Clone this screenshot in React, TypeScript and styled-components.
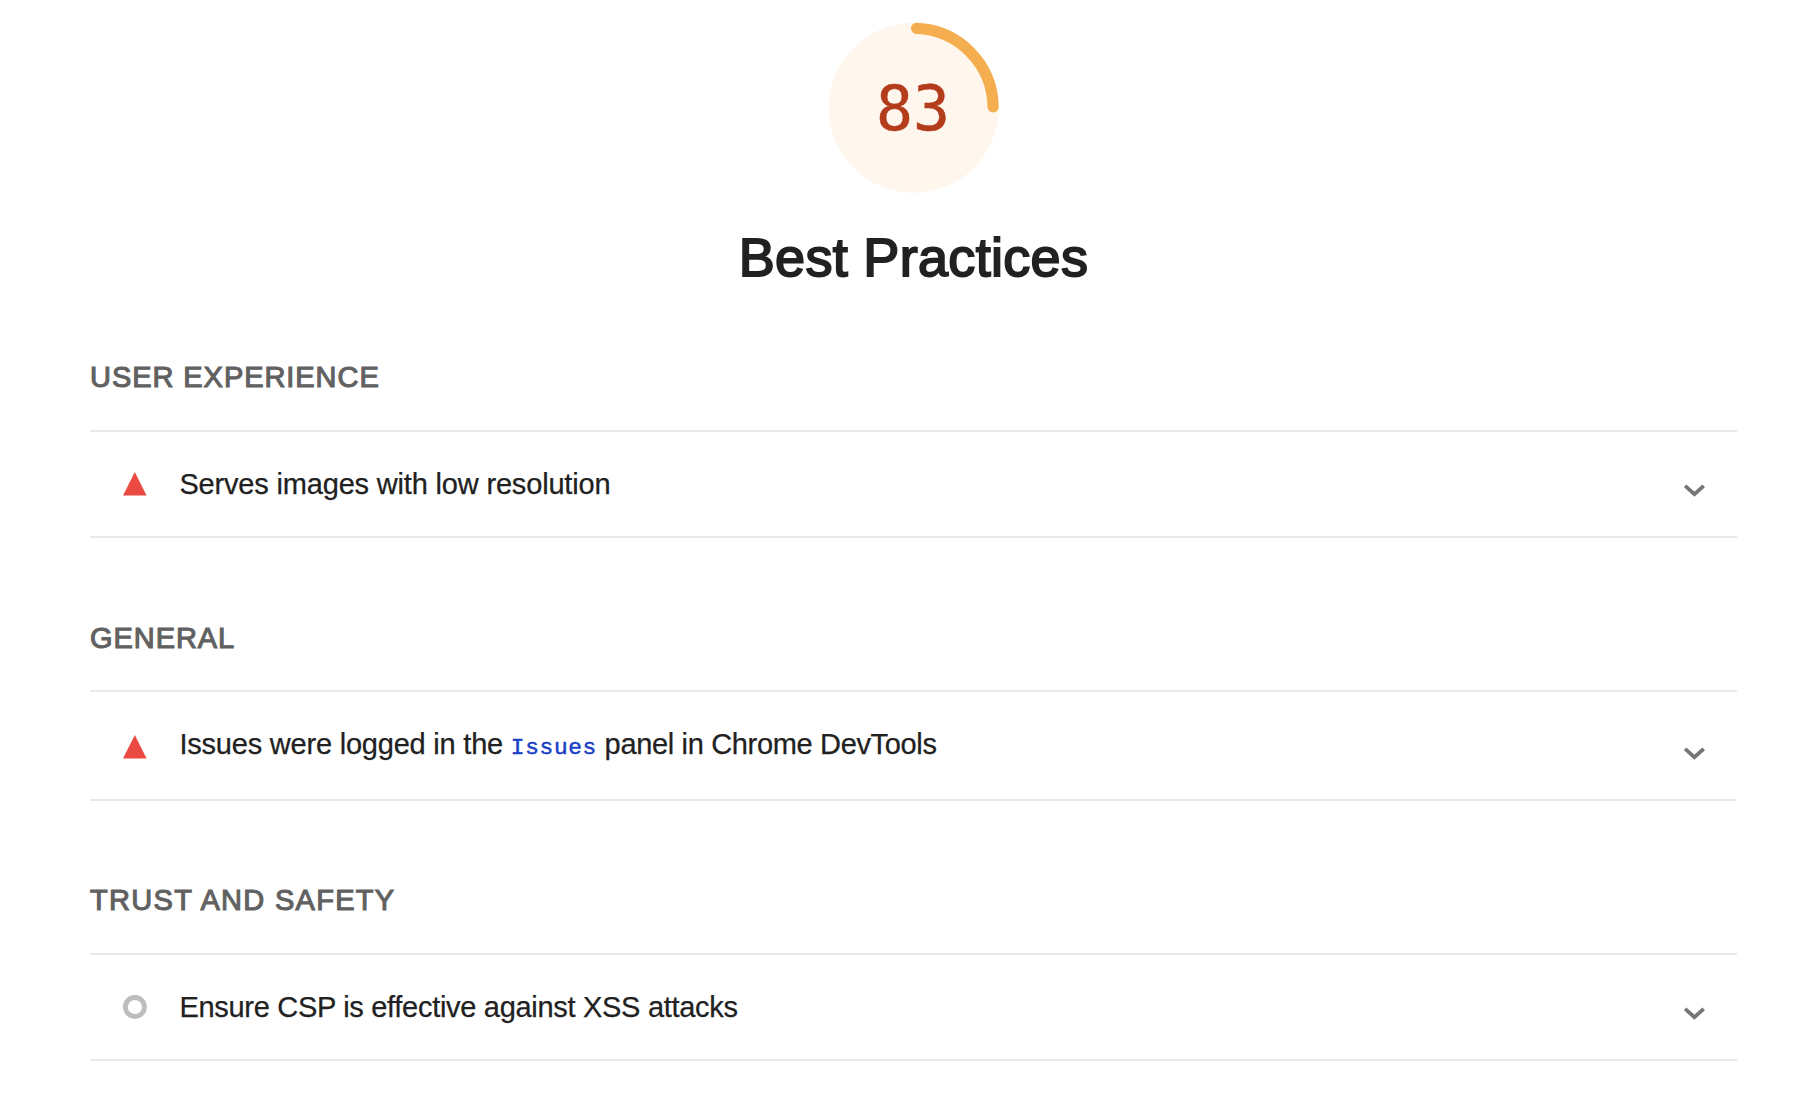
import React from "react";
import styled, { createGlobalStyle } from "styled-components";

const GlobalStyle = createGlobalStyle`
  body {
    margin: 0;
    background: #fff;
    font-family: "Liberation Sans", Arial, sans-serif;
  }
`;

const Page = styled.main`
  box-sizing: border-box;
  min-height: 1102px;
  padding: 22px 61px 0 90px;
  display: flex;
  flex-direction: column;
  background: #fff;
`;

const Header = styled.header`
  display: flex;
  flex-direction: column;
  align-items: center;
`;

const Gauge = styled.div`
  display: grid;
  place-items: center;
  width: 172px;
  height: 172px;

  > * {
    grid-area: 1 / 1;
  }
`;

const Score = styled.span`
  margin: 2px 1px 0 0;
  font-family: "DejaVu Sans Mono", monospace;
  font-size: 61.5px;
  line-height: 72px;
  color: #b33c1b;
  -webkit-text-stroke: 0.5px #b33c1b;
`;

const Title = styled.h1`
  margin: 31px 0 0;
  font-size: 54px;
  line-height: 64px;
  font-weight: 400;
  letter-spacing: 0.32px;
  color: #212121;
  -webkit-text-stroke: 1.9px #212121;
`;

const Group = styled.section<{ $top: number }>`
  margin-top: ${(p) => p.$top}px;
`;

const GroupTitle = styled.h2<{ $tracking: number; $gap: number }>`
  margin: 0 0 ${(p) => p.$gap}px;
  font-size: 29px;
  line-height: 34px;
  font-weight: 400;
  text-transform: uppercase;
  letter-spacing: ${(p) => p.$tracking}px;
  color: #616161;
  -webkit-text-stroke: 1.1px #616161;
`;

const Row = styled.div<{ $height: number }>`
  box-sizing: border-box;
  height: ${(p) => p.$height}px;
  padding: 0 31px 0 33px;
  border-top: 2px solid #e9e9e9;
  border-bottom: 2px solid #e9e9e9;
  display: flex;
  align-items: center;
`;

const Status = styled.svg<{ $drop?: number }>`
  flex: none;
  width: 24px;
  height: 24px;
  margin-top: ${(p) => p.$drop ?? 0}px;
`;

const Label = styled.div<{ $tracking: number; $lift?: number }>`
  flex: 1;
  margin-left: 32.4px;
  margin-bottom: ${(p) => p.$lift ?? 0}px;
  font-size: 29px;
  line-height: 34px;
  letter-spacing: ${(p) => p.$tracking}px;
  color: #212121;
  -webkit-text-stroke: 0.25px #212121;
  white-space: pre;
`;

const Tail = styled.span`
  letter-spacing: -0.34px;
`;

const Code = styled.code`
  font-family: "Liberation Mono", monospace;
  font-size: 22.8px;
  line-height: 1;
  letter-spacing: 0.66px;
  color: #1a40c5;
  -webkit-text-stroke: 0.5px #1a40c5;
`;

const Chevron = styled.svg<{ $drop: number }>`
  flex: none;
  width: 22px;
  height: 14px;
  margin-top: ${(p) => p.$drop}px;
`;

function Fail({ drop }: { drop?: number }) {
  return (
    <Status $drop={drop} viewBox="0 0 24 24">
      <path d="M11.8 0L23.6 23.6H0z" fill="#eb4a42" />
    </Status>
  );
}

function Neutral() {
  return (
    <Status viewBox="0 0 24 24">
      <circle cx="11.9" cy="12" r="9.5" fill="none" stroke="#bdbdbd" strokeWidth="4.8" />
    </Status>
  );
}

function Expand({ drop }: { drop: number }) {
  return (
    <Chevron $drop={drop} viewBox="0 0 22 14">
      <path d="M1.1 1.8L10.4 10.2L19.7 1.8" fill="none" stroke="#757575" strokeWidth="3.8" />
    </Chevron>
  );
}

export default function App() {
  return (
    <>
      <GlobalStyle />
      <Page>
        <Header>
          <Gauge>
            <svg width="172" height="172" viewBox="0 0 172 172">
              <circle cx="85.7" cy="85.8" r="85" fill="#fff7ed" />
              <path
                d="M88.6 6.4A79.5 79.5 0 0 1 165.1 84.8"
                fill="none"
                stroke="#f4ad4f"
                strokeWidth="11.3"
                strokeLinecap="round"
              />
            </svg>
            <Score>83</Score>
          </Gauge>
          <Title>Best Practices</Title>
        </Header>

        <Group $top={71}>
          <GroupTitle $tracking={0.94} $gap={36}>User Experience</GroupTitle>
          <Row $height={108}>
            <Fail />
            <Label $tracking={-0.175}>Serves images with low resolution</Label>
            <Expand drop={13} />
          </Row>
        </Group>

        <Group $top={83}>
          <GroupTitle $tracking={0.93} $gap={35}>General</GroupTitle>
          <Row $height={111}>
            <Fail drop={3} />
            <Label $tracking={-0.21} $lift={3}>
              Issues were logged in the <Code>Issues</Code>
              <Tail> panel in Chrome DevTools</Tail>
            </Label>
            <Expand drop={16} />
          </Row>
        </Group>

        <Group $top={82}>
          <GroupTitle $tracking={1.3} $gap={36}>Trust and Safety</GroupTitle>
          <Row $height={108}>
            <Neutral />
            <Label $tracking={-0.3}>Ensure CSP is effective against XSS attacks</Label>
            <Expand drop={13} />
          </Row>
        </Group>
      </Page>
    </>
  );
}
